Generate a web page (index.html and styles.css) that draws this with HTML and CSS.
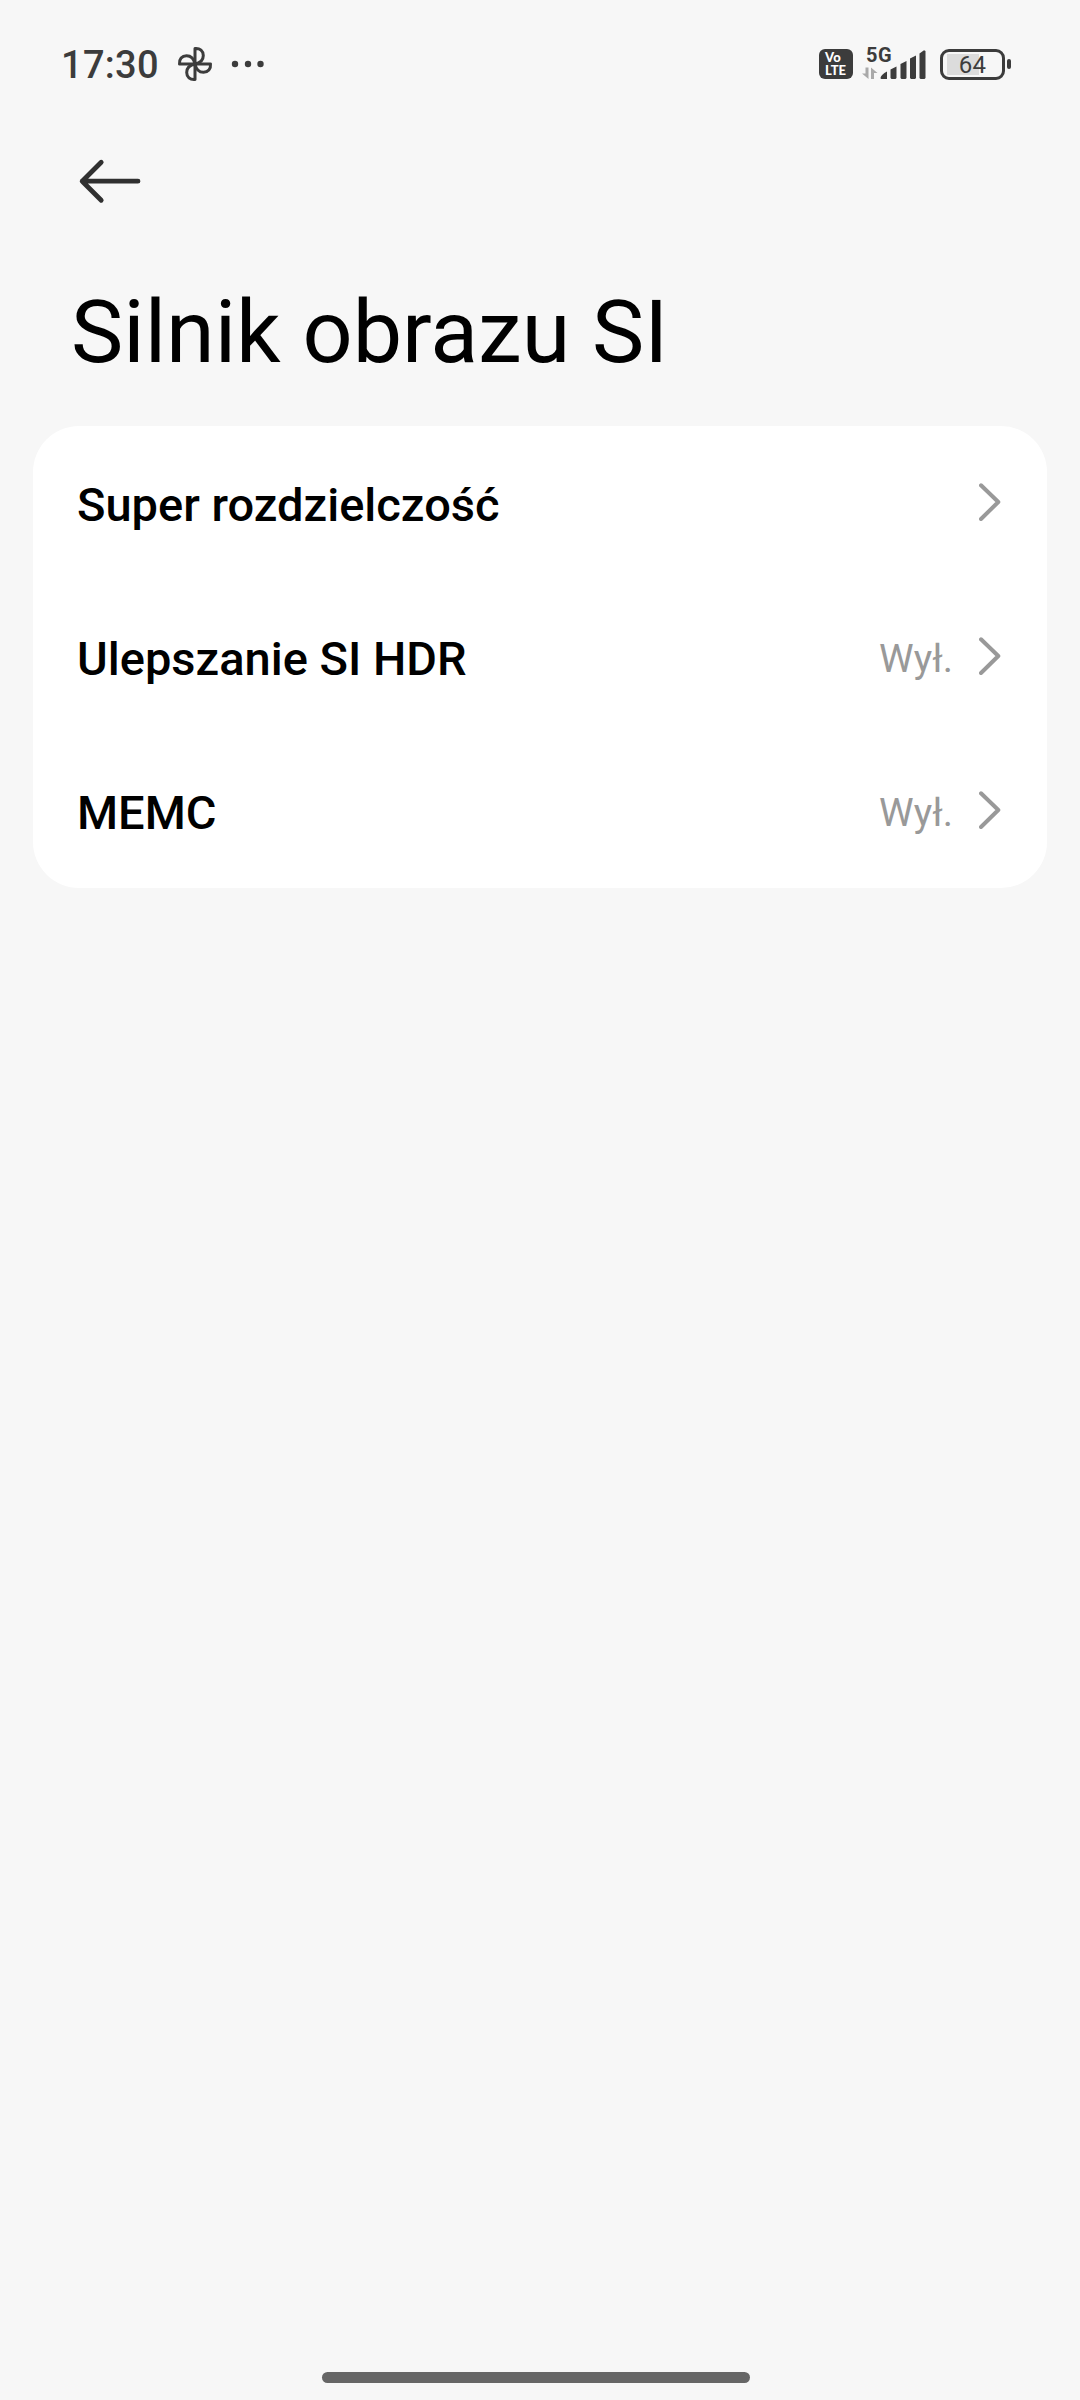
FILE: index.html
```html
<!DOCTYPE html>
<html lang="pl">
<head>
<meta charset="utf-8">
<title>Silnik obrazu SI</title>
<link rel="stylesheet" href="styles.css">
</head>
<body>
<div class="screen">
  <header class="status">
    <span class="time">17:30</span>
    <svg class="fan" viewBox="0 0 36 36" width="36" height="36">
      <g fill="none" stroke="#3c3c3c" stroke-width="3" stroke-linejoin="round">
        <path d="M18 18V2.500C23 2 26.300 5 26.300 9.500C26.300 14.500 23 17 18 18Z"/>
        <path d="M18 18H33.500C34 23 31 26.300 26.500 26.300C21.500 26.300 19 23 18 18Z"/>
        <path d="M18 18V33.500C13 34 9.700 31 9.700 26.500C9.700 21.500 13 19 18 18Z"/>
        <path d="M18 18H2.500C2 13 5 9.700 9.500 9.700C14.500 9.700 17 13 18 18Z"/>
      </g>
    </svg>
    <svg class="dots" viewBox="0 0 34 8" width="34" height="8" fill="#3c3c3c">
      <circle cx="4" cy="4" r="3.200"/><circle cx="17" cy="4" r="3.200"/><circle cx="29.500" cy="4" r="3.200"/>
    </svg>
    <div class="volte"><span class="vo">Vo</span><span class="lte">LTE</span></div>
    <div class="signal">
      <span class="net">5G</span>
      <svg class="bars" viewBox="0 0 64 32" width="64" height="32">
        <g fill="#a9a9a9">
          <path d="M3.500 18.500H6.500V30L0 24.500H3.500Z"/>
          <path d="M9 30V18.500L15.500 24H12V30Z"/>
        </g>
        <g fill="#3c3c3c">
          <path d="M18.500 29Q19 25.500 25 22.500V30H19.500Q18.500 30 18.500 29Z"/>
          <path d="M28.500 20.500 34.500 17.500V29L33.500 30H29.500L28.500 29Z"/>
          <path d="M38.500 15 44.500 12V29L43.500 30H39.500L38.500 29Z"/>
          <path d="M48 9.500 54 6.500V29L53 30H49L48 29Z"/>
          <path d="M57.500 4.500 62 1.200 63.500 2V29L62.500 30H58.500L57.500 29Z"/>
        </g>
      </svg>
    </div>
    <div class="battery"><span class="cell"><span class="level">64</span></span><span class="cap"></span></div>
  </header>
  <nav class="nav">
    <svg viewBox="0 0 64 46" width="64" height="46" fill="none" stroke="#303030" stroke-width="4.800" stroke-linecap="round" stroke-linejoin="round">
      <path d="M23.200 4.200 4.200 23.200 23.200 42.200M4.200 23.200H60"/>
    </svg>
  </nav>
  <h1 class="title">Silnik obrazu SI</h1>
  <main class="card">
    <div class="row"><span class="label">Super rozdzielczość</span>
      <svg class="chev" viewBox="0 0 22 38" width="22" height="38"><path d="M2 2.300 19.300 19 2 36"/></svg></div>
    <div class="row"><span class="label">Ulepszanie SI HDR</span><span class="value">Wył.</span>
      <svg class="chev" viewBox="0 0 22 38" width="22" height="38"><path d="M2 2.300 19.300 19 2 36"/></svg></div>
    <div class="row"><span class="label">MEMC</span><span class="value">Wył.</span>
      <svg class="chev" viewBox="0 0 22 38" width="22" height="38"><path d="M2 2.300 19.300 19 2 36"/></svg></div>
  </main>
  <div class="home"></div>
</div>
</body>
</html>
```
FILE: styles.css
```css
* { box-sizing: border-box; }
body { margin: 0; background: #f7f7f7; font-family: Roboto, sans-serif; }
.screen { width: 1080px; height: 2400px; display: flex; flex-direction: column; }
.status { height: 128px; display: flex; align-items: center; padding-left: 61px; color: #3c3c3c; }
.time { font-size: 38px; font-weight: 500; letter-spacing: 0.3px; line-height: 44px; width: 116px; padding-top: 2px; }
.fan { margin-left: 0; }
.dots { margin-left: 18px; }
.volte { margin-left: 554px; width: 34px; height: 30px; border-radius: 6px; background: #3c3c3c; color: #fff; display: flex; flex-direction: column; padding: 2px 0 0 6px; font: 900 13px/13px Lato, sans-serif; }
.vo { letter-spacing: 0.3px; }
.signal { margin-left: 9px; width: 64px; height: 34px; display: flex; flex-direction: column; }
.net { height: 2px; padding-left: 4px; font-size: 20px; font-weight: 700; line-height: 16px; letter-spacing: 0.5px; }
.battery { margin-left: 14px; display: flex; align-items: center; gap: 2px; }
.cell { width: 65px; height: 31px; border: 3px solid #3c3c3c; border-radius: 9px; padding: 2px 4px 0; background: linear-gradient(#dcdcdc, #dcdcdc) 4px 2px / 32px 21px no-repeat; display: flex; justify-content: center; align-items: center; }
.level { font-size: 24px; line-height: 24px; letter-spacing: 0.3px; }
.cap { width: 4px; height: 10px; border-radius: 2px; background: #3c3c3c; }
.nav { height: 142px; padding: 30px 0 0 78px; }
.title { margin: 0; height: 156px; padding: 9px 0 0 71px; font-size: 88px; font-weight: 400; line-height: 106px; color: #000; }
.card { margin: 0 33px; height: 462px; background: #fff; border-radius: 46px; }
.row { height: 154px; display: flex; align-items: center; padding: 0 46px 0 44px; }
.label { flex: 1; font-size: 47px; font-weight: 500; line-height: 54px; color: #000; padding-top: 3px; }
.value { font-size: 39px; line-height: 46px; color: #999; margin-right: 26px; padding-top: 3px; }
.chev { margin-bottom: 2px; fill: none; stroke: #999; stroke-width: 4; stroke-linecap: round; stroke-linejoin: round; }
.home { margin: auto 0 17px 322px; width: 428px; height: 11px; border-radius: 6px; background: #666; }
```
